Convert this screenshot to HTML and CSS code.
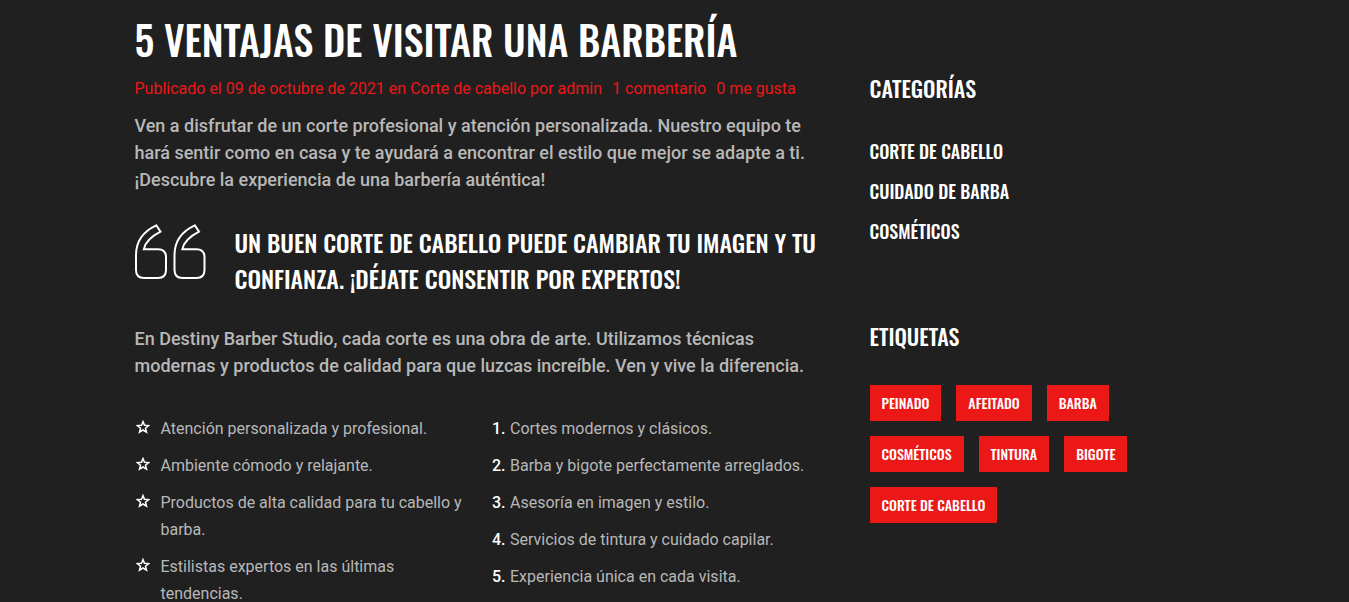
FILE: index.html
```html
<!DOCTYPE html>
<html lang="es">
<head>
<meta charset="utf-8">
<meta name="viewport" content="width=device-width, initial-scale=1">
<title>5 ventajas de visitar una barbería</title>
<link rel="stylesheet" href="styles.css">
</head>
<body>
<svg width="0" height="0" class="defs" aria-hidden="true">
  <symbol id="star" viewBox="0 0 14 14">
    <path d="M7 1.6 L8.5 5.3 L12.6 5.6 L9.5 8.2 L10.5 12.2 L7 10 L3.5 12.2 L4.5 8.2 L1.4 5.6 L5.5 5.3 Z"/>
  </symbol>
</svg>
<div class="container">
  <main class="post">
    <h1 class="post-title">5 VENTAJAS DE VISITAR UNA BARBERÍA</h1>
    <div class="post-meta">
      <span>Publicado el 09 de octubre de 2021 en <a href="#">Corte de cabello</a> por <a href="#">admin</a></span>
      <a href="#">1 comentario</a>
      <a href="#">0 me gusta</a>
    </div>
    <p class="lead">Ven a disfrutar de un corte profesional y atención personalizada. Nuestro equipo te hará sentir como en casa y te ayudará a encontrar el estilo que mejor se adapte a ti. ¡Descubre la experiencia de una barbería auténtica!</p>
    <blockquote class="quote">
      <svg class="quote-mark" viewBox="0 0 71 56" aria-hidden="true">
        <path id="q" d="M21.300 1.300 L25.500 7.600 C16 12.500 10 18.500 8.800 25.300 H23 Q31 25.300 31 33.300 V46 Q31 54 23 54 H9 Q1 54 1 46 V31 C1 17 9 7 21.300 1.300 Z"/>
        <use href="#q" x="38.500"/>
      </svg>
      <p class="quote-text">UN BUEN CORTE DE CABELLO PUEDE CAMBIAR TU IMAGEN Y TU CONFIANZA. ¡DÉJATE CONSENTIR POR EXPERTOS!</p>
    </blockquote>
    <p class="lead">En Destiny Barber Studio, cada corte es una obra de arte. Utilizamos técnicas modernas y productos de calidad para que luzcas increíble. Ven y vive la diferencia.</p>
    <div class="lists">
      <ul class="list stars">
        <li><svg class="star" aria-hidden="true"><use href="#star"/></svg>Atención personalizada y profesional.</li>
        <li><svg class="star" aria-hidden="true"><use href="#star"/></svg>Ambiente cómodo y relajante.</li>
        <li><svg class="star" aria-hidden="true"><use href="#star"/></svg>Productos de alta calidad para tu cabello y barba.</li>
        <li><svg class="star" aria-hidden="true"><use href="#star"/></svg>Estilistas expertos en las últimas tendencias.</li>
      </ul>
      <ol class="list numbers">
        <li>Cortes modernos y clásicos.</li>
        <li>Barba y bigote perfectamente arreglados.</li>
        <li>Asesoría en imagen y estilo.</li>
        <li>Servicios de tintura y cuidado capilar.</li>
        <li>Experiencia única en cada visita.</li>
      </ol>
    </div>
  </main>
  <aside class="sidebar">
    <section>
      <h2 class="widget-title">CATEGORÍAS</h2>
      <ul class="categories">
        <li><a href="#">CORTE DE CABELLO</a></li>
        <li><a href="#">CUIDADO DE BARBA</a></li>
        <li><a href="#">COSMÉTICOS</a></li>
      </ul>
    </section>
    <section>
      <h2 class="widget-title">ETIQUETAS</h2>
      <div class="tags">
        <a href="#">PEINADO</a>
        <a href="#">AFEITADO</a>
        <a href="#">BARBA</a>
        <a href="#">COSMÉTICOS</a>
        <a href="#">TINTURA</a>
        <a href="#">BIGOTE</a>
        <a href="#">CORTE DE CABELLO</a>
      </div>
    </section>
  </aside>
</div>
</body>
</html>
```

FILE: styles.css
```css
* { box-sizing: border-box; }
body {
  margin: 0;
  background: #202020;
  color: #b8b8b8;
  font: 16px/27px Roboto, sans-serif;
}
h1, h2, p, ul, ol, blockquote { margin: 0; padding: 0; }
ul, ol { list-style: none; }
a { color: inherit; text-decoration: none; }
.defs { display: block; }
.container {
  max-width: 1080px;
  margin: 0 auto;
  display: grid;
  grid-template-columns: minmax(0, 685fr) minmax(0, 345fr);
  gap: 50px;
}
.post-title, .quote-text, .widget-title, .categories, .tags {
  font-family: Oswald, "Roboto Condensed", "Liberation Sans Narrow", "Liberation Sans", sans-serif;
  font-weight: 500;
  color: #fff;
}
.post { padding-top: 10px; }
.post-title { font-size: 40px; line-height: 58px; }
.post-meta { display: flex; gap: 10px; margin: 7px 0 10px; color: #ec1717; }
.lead { font-size: 18px; font-weight: 500; }
.quote { display: flex; gap: 29px; margin: 31px 0 29px; }
.quote-mark { flex: none; width: 71px; height: 56px; fill: none; stroke: #fff; stroke-width: 2; }
.quote-text { font-size: 24px; line-height: 36px; }
.lists { display: grid; grid-template-columns: 1fr 1fr; gap: 30px; margin-top: 36px; }
.list li { display: flex; margin-bottom: 10px; }
.star { flex: none; width: 14px; height: 14px; margin: 5px 11px 0 1px; fill: none; stroke: #fff; stroke-width: 1.5; }
.numbers { counter-reset: n; }
.numbers li::before { counter-increment: n; content: counter(n) "."; flex: none; width: 18px; color: #fff; font-weight: 500; }
.sidebar { padding-top: 70px; }
.widget-title { font-size: 22px; line-height: 36px; }
.categories { margin: 32px 0 74px; font-size: 18px; }
.categories li { line-height: 26px; margin-bottom: 14px; }
.tags { display: flex; flex-wrap: wrap; gap: 15px; margin-top: 31px; font-size: 14px; }
.tags a { padding: 4px 12px 5px; background: #ec1717; }
```
